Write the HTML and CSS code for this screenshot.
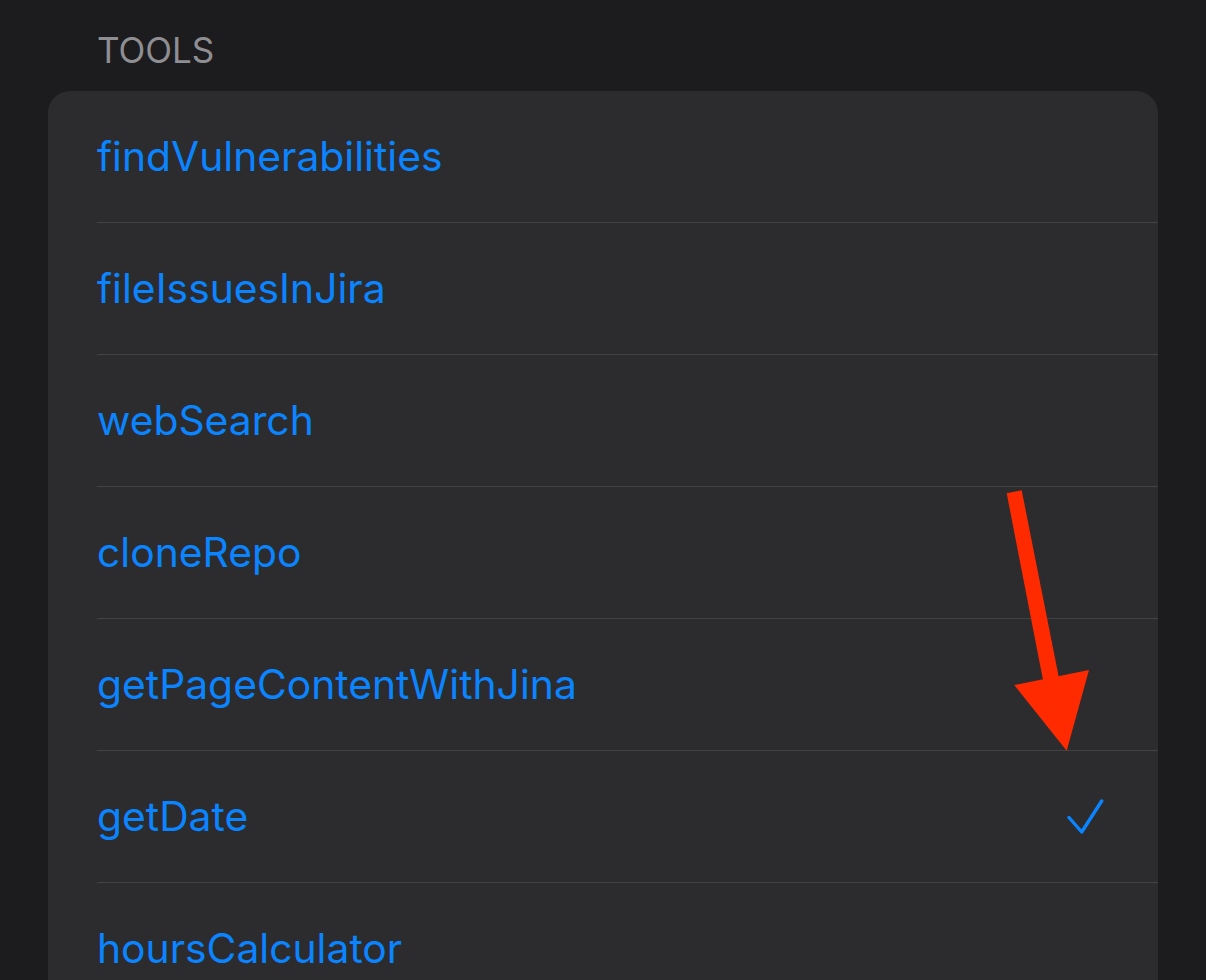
FILE: index.html
```html
<!DOCTYPE html>
<html lang="en">
<head>
<meta charset="utf-8">
<title>Tools</title>
<link rel="stylesheet" href="styles.css">
</head>
<body>
<main class="page">
  <h2 class="section-title">TOOLS</h2>
  <ul class="list">
    <li class="row"><div class="row-inner"><span class="label">findVulnerabilities</span></div></li>
    <li class="row"><div class="row-inner"><span class="label">fileIssuesInJira</span></div></li>
    <li class="row"><div class="row-inner"><span class="label">webSearch</span></div></li>
    <li class="row"><div class="row-inner"><span class="label">cloneRepo</span></div></li>
    <li class="row"><div class="row-inner"><span class="label">getPageContentWithJina</span></div></li>
    <li class="row"><div class="row-inner"><span class="label">getDate</span>
      <svg class="check" width="38" height="38" viewBox="0 0 38 38"><path d="M3 18.5 L15.7 33 L35.7 2" fill="none" stroke="#0a84ff" stroke-width="3.4" stroke-linecap="round" stroke-linejoin="round"/></svg>
    </div></li>
    <li class="row"><div class="row-inner"><span class="label">hoursCalculator</span></div></li>
  </ul>
  <svg class="arrow" width="1206" height="980" viewBox="0 0 1206 980">
    <polygon points="1006.7,493.3 1021.7,490.3 1058.7,676.7 1043,680" fill="#ff2a00"/>
    <polygon points="1014.3,685 1089,670 1066.7,750.7" fill="#ff2a00"/>
  </svg>
</main>
</body>
</html>
```
FILE: styles.css
```css
html, body {
  margin: 0;
  padding: 0;
  background: #1c1c1e;
  height: 100%;
  overflow: hidden;
}
body {
  font-family: Inter, "Liberation Sans", sans-serif;
  -webkit-font-smoothing: antialiased;
}
.page {
  position: relative;
  padding: 0 48px 0 48px;
  width: 1110px;
}
.section-title {
  margin: 0;
  padding: 33px 0 0 49px;
  height: 91px;
  box-sizing: border-box;
  font-size: 35px;
  line-height: 35px;
  font-weight: 400;
  color: #8e8e93;
}
.list {
  list-style: none;
  margin: 0;
  padding: 0;
  background: #2c2c2e;
  border-radius: 22px 22px 0 0;
  overflow: hidden;
}
.row {
  padding-left: 49px;
}
.row-inner {
  height: 131px;
  display: flex;
  align-items: center;
  justify-content: space-between;
  border-bottom: 1px solid #424245;
  padding-right: 54px;
}
.row:last-child .row-inner {
  border-bottom: none;
}
.label {
  font-size: 40.8px;
  color: #0a84ff;
  line-height: 1;
}
.check {
  display: block;
  margin-top: 3px;
}
.arrow {
  position: absolute;
  left: 0;
  top: 0;
  pointer-events: none;
}
```
